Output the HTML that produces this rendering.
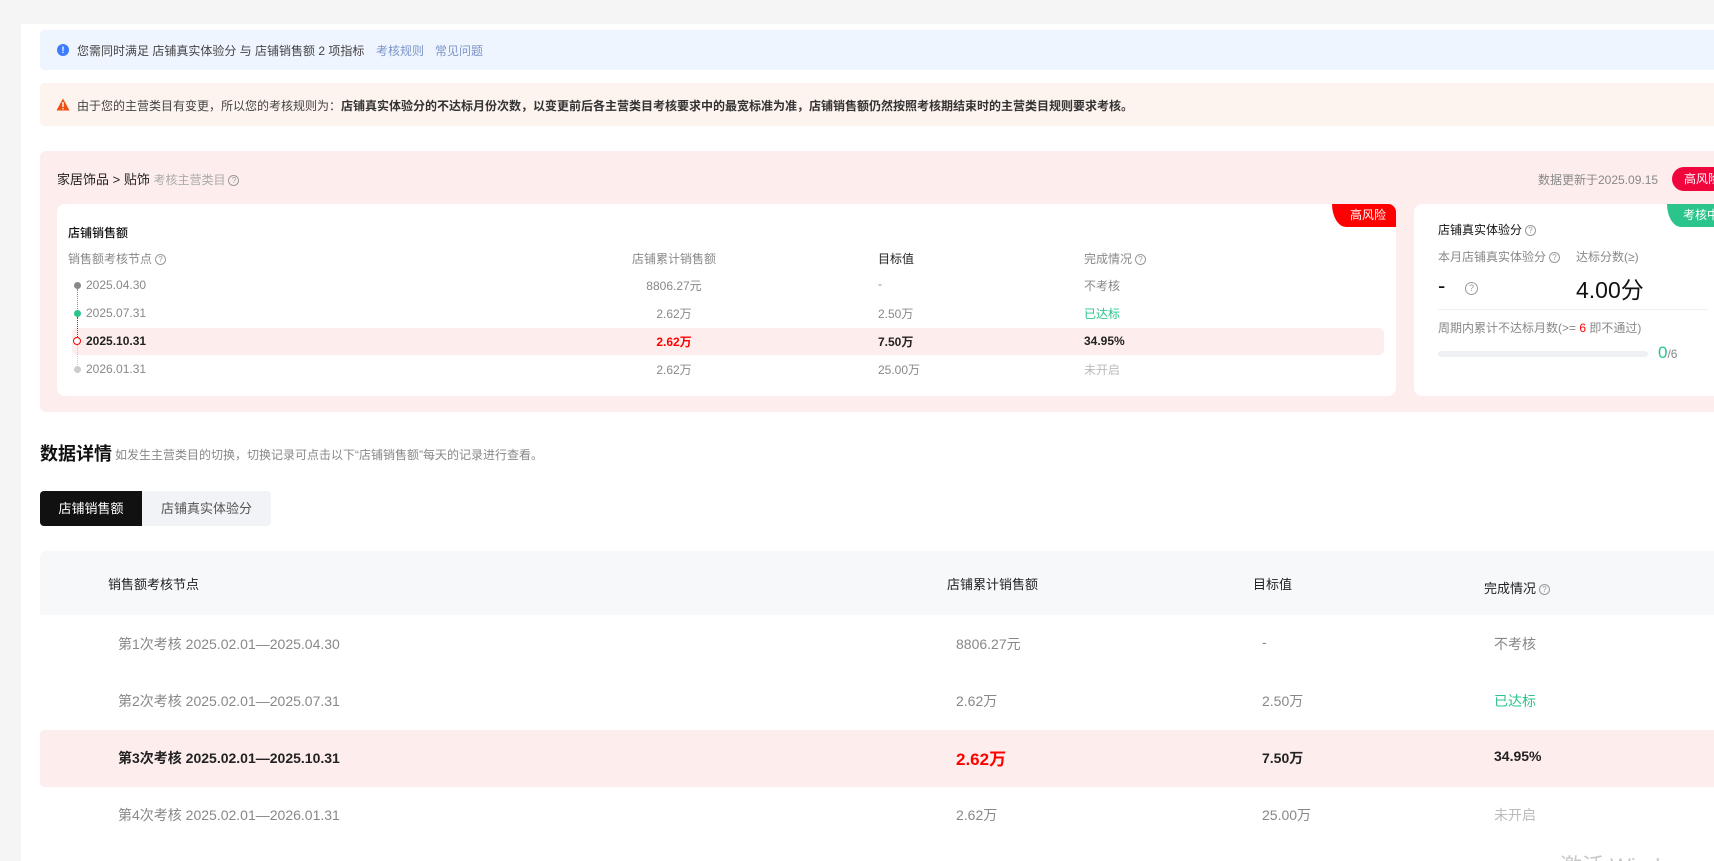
<!DOCTYPE html>
<html style="width:1714px;height:861px;overflow:hidden"><head><meta charset="utf-8"><style>
*{margin:0;padding:0;box-sizing:border-box}
body{width:1714px;height:861px;overflow:hidden;background:#f5f5f5;font-family:"Liberation Sans","Noto Sans CJK SC",sans-serif;color:#333;position:relative}
.a{position:absolute;white-space:nowrap}
.panel{position:absolute;left:21px;top:24px;width:1693px;height:837px;background:#fff}
.q{display:inline-block;width:11px;height:11px;border:1px solid #999;border-radius:50%;font-size:8px;line-height:9px;text-align:center;color:#999;vertical-align:1px;margin-left:3px}
.f12{font-size:12px}.f13{font-size:13px}.f14{font-size:14px}
.g{color:#888}.lg{color:#bbb}.gr{color:#2bc48b}.b{font-weight:bold;color:#222}
.d{line-height:17px}
</style></head><body>
<div class="panel"></div>
<div class="a" style="left:40px;top:30px;width:1674px;height:40px;background:#eff5ff;border-radius:4px 0 0 4px"></div>
<div class="a" style="left:57px;top:44px;width:12px;height:12px;border-radius:50%;background:#3d7bff;color:#fff;font-size:9px;line-height:12px;text-align:center;font-weight:bold">!</div>
<div class="a f12" style="left:77px;top:42px;color:#444">您需同时满足 店铺真实体验分 与 店铺销售额 2 项指标</div>
<div class="a f12" style="left:376px;top:42px;color:#7c94c8">考核规则</div>
<div class="a f12" style="left:435px;top:42px;color:#7c94c8">常见问题</div>
<div class="a" style="left:40px;top:83px;width:1674px;height:43px;background:#fdf3ef;border-radius:4px 0 0 4px"></div>
<svg class="a" style="left:56px;top:98px" width="14" height="13" viewBox="0 0 14 13"><path d="M7 0.5L13.5 12.5H0.5Z" fill="#f0500f"/><rect x="6.3" y="4" width="1.4" height="5" fill="#fff"/><rect x="6.3" y="10" width="1.4" height="1.4" fill="#fff"/></svg>
<div class="a f12" style="left:77px;top:97px;color:#444">由于您的主营类目有变更，所以您的考核规则为：<b style="color:#333">店铺真实体验分的不达标月份次数，以变更前后各主营类目考核要求中的最宽标准为准，店铺销售额仍然按照考核期结束时的主营类目规则要求考核。</b></div>
<div class="a" style="left:40px;top:151px;width:1674px;height:261px;background:#fdeeed;border-radius:6px 0 0 6px"></div>
<div class="a f13" style="left:57px;top:169px;color:#222">家居饰品 &gt; 贴饰 <span class="f12" style="color:#aaa">考核主营类目</span><span class="q">?</span></div>
<div class="a f12" style="left:1538px;top:171px;color:#888">数据更新于2025.09.15</div>
<div class="a f12" style="left:1672px;top:167px;width:60px;height:24px;background:#f0063c;border-radius:12px;color:#fff;line-height:24px;padding-left:12px">高风险</div>
<div class="a" style="left:57px;top:204px;width:1339px;height:192px;background:#fff;border-radius:8px;overflow:hidden">
 <div class="a f12" style="right:0;top:0;width:64px;height:23px;background:#ff0000;color:#fff;line-height:23px;padding-left:18px;border-bottom-left-radius:14px 23px">高风险</div>
</div>
<div class="a f12" style="left:68px;top:224px;color:#111;font-weight:500">店铺销售额</div>
<div class="a f12 g" style="left:68px;top:250px">销售额考核节点<span class="q">?</span></div>
<div class="a f12 g" style="left:632px;top:250px">店铺累计销售额</div>
<div class="a f12" style="left:878px;top:250px;color:#222">目标值</div>
<div class="a f12 g" style="left:1084px;top:250px">完成情况<span class="q">?</span></div>
<div class="a" style="left:72px;top:328px;width:1312px;height:27px;background:#fdeeed;border-radius:5px"></div>
<div class="a" style="left:77px;top:289px;border-left:1px dotted #2bc48b;height:22px"></div>
<div class="a" style="left:77px;top:317px;border-left:1px dotted #f00;height:22px"></div>
<div class="a" style="left:77px;top:345px;border-left:1px dotted #ccc;height:22px"></div>
<div class="a" style="left:74px;top:282px;width:7px;height:7px;border-radius:50%;background:#888"></div>
<div class="a" style="left:74px;top:310px;width:7px;height:7px;border-radius:50%;background:#2bc48b"></div>
<div class="a" style="left:73px;top:337px;width:8px;height:8px;border-radius:50%;border:1.5px solid #f00;background:#fff"></div>
<div class="a" style="left:74px;top:366px;width:7px;height:7px;border-radius:50%;background:#ccc"></div>
<div class="a f12 g d" style="left:86px;top:277px">2025.04.30</div>
<div class="a f12 g d" style="left:86px;top:305px">2025.07.31</div>
<div class="a f12 b d" style="left:86px;top:333px">2025.10.31</div>
<div class="a f12 g d" style="left:86px;top:361px">2026.01.31</div>
<div class="a f12 g" style="left:674px;top:277px;transform:translateX(-50%)">8806.27元</div>
<div class="a f12 g" style="left:674px;top:305px;transform:translateX(-50%)">2.62万</div>
<div class="a f12 b" style="left:674px;top:333px;transform:translateX(-50%);color:#f00">2.62万</div>
<div class="a f12 g" style="left:674px;top:361px;transform:translateX(-50%)">2.62万</div>
<div class="a f12 g" style="left:878px;top:277px">-</div>
<div class="a f12 g" style="left:878px;top:305px">2.50万</div>
<div class="a f12 b" style="left:878px;top:333px">7.50万</div>
<div class="a f12 g" style="left:878px;top:361px">25.00万</div>
<div class="a f12 g" style="left:1084px;top:277px">不考核</div>
<div class="a f12 gr" style="left:1084px;top:305px">已达标</div>
<div class="a f12 b d" style="left:1084px;top:333px">34.95%</div>
<div class="a f12 lg" style="left:1084px;top:361px">未开启</div>
<div class="a" style="left:1414px;top:204px;width:300px;height:192px;background:#fff;border-radius:8px 0 0 8px;overflow:hidden">
 <div class="a f12" style="left:253px;top:0;width:60px;height:23px;background:#2bc48b;color:#fff;line-height:23px;padding-left:16px;border-bottom-left-radius:14px 23px">考核中</div>
</div>
<div class="a f12" style="left:1438px;top:221px;color:#111">店铺真实体验分<span class="q">?</span></div>
<div class="a f12 g" style="left:1438px;top:248px">本月店铺真实体验分<span class="q">?</span></div>
<div class="a f12 g" style="left:1576px;top:248px">达标分数(≥)</div>
<div class="a" style="left:1438px;top:273px;font-size:22px;color:#111">-</div>
<div class="a" style="left:1465px;top:282px;width:13px;height:13px;border:1px solid #999;border-radius:50%;font-size:9px;line-height:11px;text-align:center;color:#999">?</div>
<div class="a" style="left:1576px;top:271px;font-size:23px;color:#111">4.00分</div>
<div class="a" style="left:1438px;top:309px;width:270px;height:1px;background:#f0f0f0"></div>
<div class="a f12 g" style="left:1438px;top:319px">周期内累计不达标月数(&gt;= <span style="color:#f00">6</span> 即不通过)</div>
<div class="a" style="left:1438px;top:351px;width:210px;height:6px;background:#eef0f4;border-radius:3px"></div>
<div class="a" style="left:1658px;top:343px;font-size:17px;color:#2bc48b">0<span style="font-size:12px;color:#888">/6</span></div>
<div class="a" style="left:40px;top:440px;font-size:18px;font-weight:bold;color:#111">数据详情</div>
<div class="a f12 g" style="left:115px;top:446px">如发生主营类目的切换，切换记录可点击以下“店铺销售额”每天的记录进行查看。</div>
<div class="a" style="left:40px;top:491px;width:231px;height:35px;background:#f2f3f7;border-radius:4px"></div>
<div class="a f13" style="left:40px;top:491px;width:102px;height:35px;background:#111;color:#fff;border-radius:4px 0 0 4px;line-height:35px;text-align:center">店铺销售额</div>
<div class="a f13" style="left:142px;top:491px;width:129px;height:35px;color:#555;line-height:35px;text-align:center">店铺真实体验分</div>
<div class="a" style="left:40px;top:551px;width:1674px;height:64px;background:#f7f8fa;border-radius:6px 0 0 0"></div>
<div class="a f13" style="left:108px;top:574px;color:#222">销售额考核节点</div>
<div class="a f13" style="left:947px;top:574px;color:#222">店铺累计销售额</div>
<div class="a f13" style="left:1253px;top:574px;color:#222">目标值</div>
<div class="a f13" style="left:1484px;top:578px;color:#222">完成情况<span class="q">?</span></div>
<div class="a" style="left:40px;top:730px;width:1674px;height:57px;background:#fdeeed;border-radius:4px 0 0 4px"></div>
<div class="a f14 g" style="left:118px;top:634px">第1次考核 2025.02.01—2025.04.30</div>
<div class="a f14 g" style="left:118px;top:691px">第2次考核 2025.02.01—2025.07.31</div>
<div class="a f14 b" style="left:118px;top:748px">第3次考核 2025.02.01—2025.10.31</div>
<div class="a f14 g" style="left:118px;top:805px">第4次考核 2025.02.01—2026.01.31</div>
<div class="a f14 g" style="left:956px;top:634px">8806.27元</div>
<div class="a f14 g" style="left:956px;top:691px">2.62万</div>
<div class="a b" style="left:956px;top:745px;font-size:17px;color:#f00">2.62万</div>
<div class="a f14 g" style="left:956px;top:805px">2.62万</div>
<div class="a f14 g" style="left:1262px;top:634px">-</div>
<div class="a f14 g" style="left:1262px;top:691px">2.50万</div>
<div class="a f14 b" style="left:1262px;top:748px">7.50万</div>
<div class="a f14 g" style="left:1262px;top:805px">25.00万</div>
<div class="a f14 g" style="left:1494px;top:634px">不考核</div>
<div class="a f14 gr" style="left:1494px;top:691px">已达标</div>
<div class="a f14 b" style="left:1494px;top:748px">34.95%</div>
<div class="a f14 lg" style="left:1494px;top:805px">未开启</div>
<div class="a" style="left:1560px;top:849px;font-size:22px;color:#c8c8c8">激活 Windows</div>
</body></html>
